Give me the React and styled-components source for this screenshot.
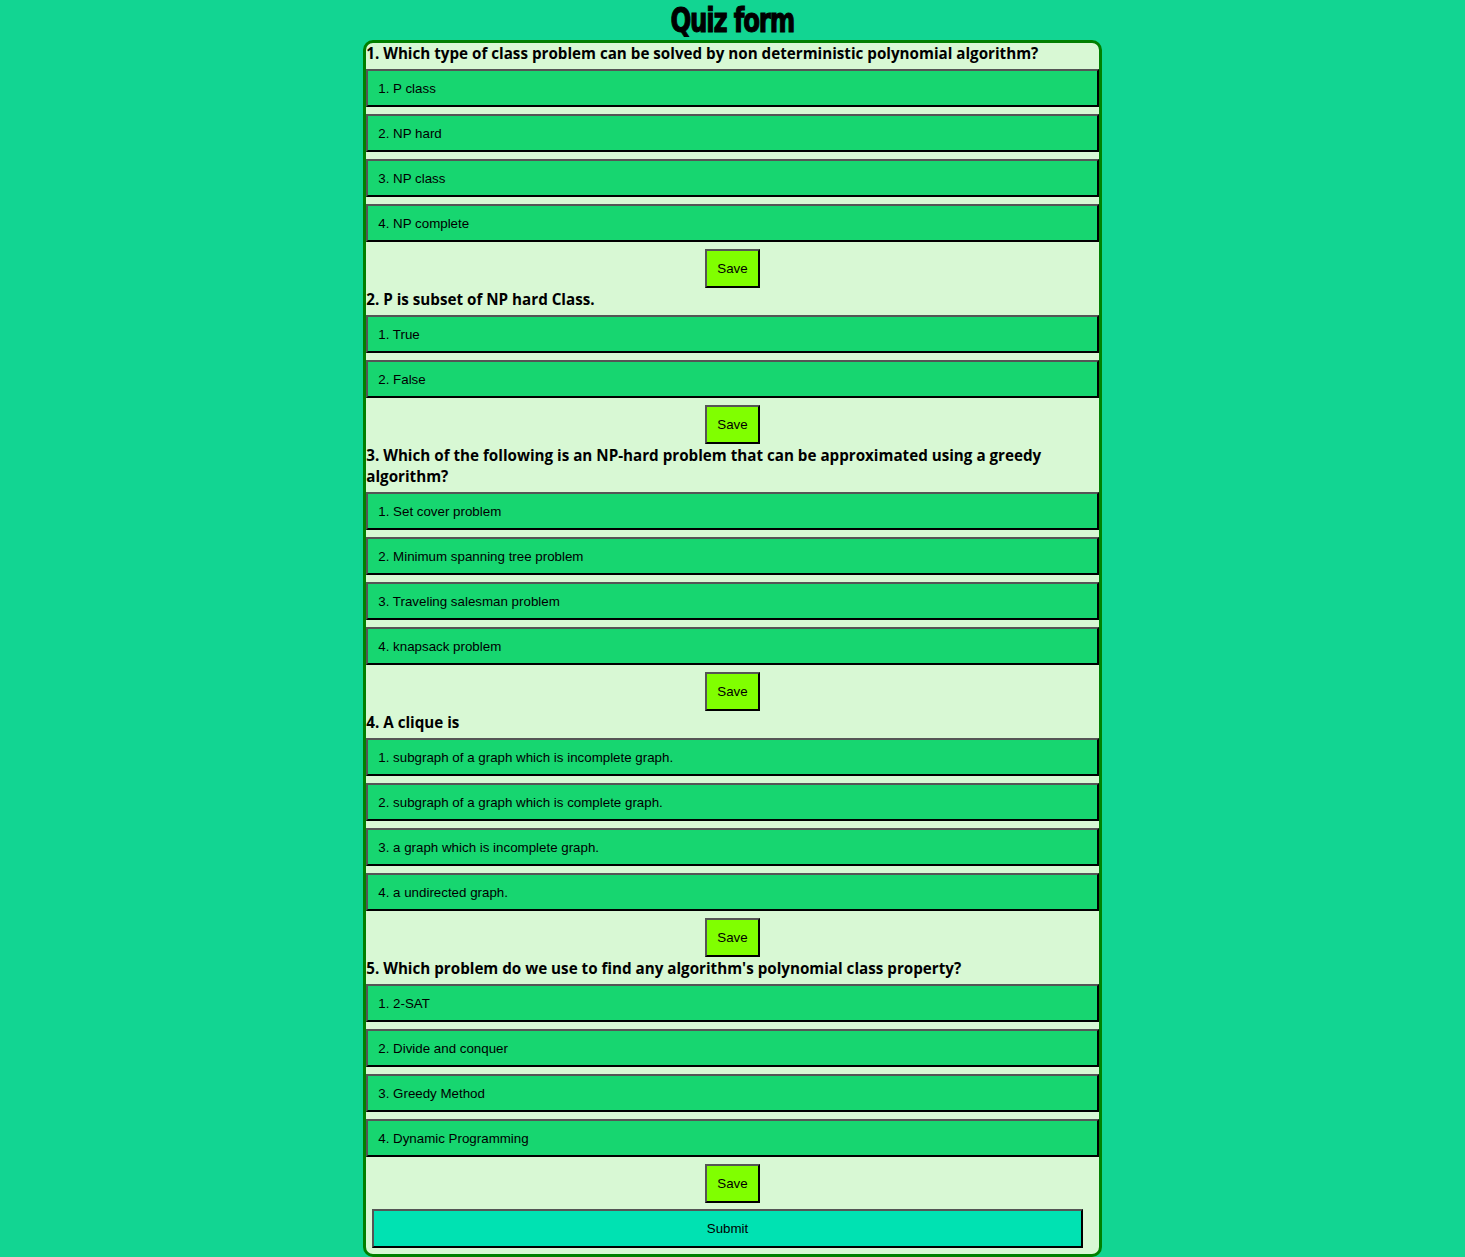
import { createGlobalStyle, styled } from 'styled-components';

const questions = [
  {
    text: '1. Which type of class problem can be solved by non deterministic polynomial algorithm?',
    options: ['P class', 'NP hard', 'NP class', 'NP complete'],
  },
  {
    text: '2. P is subset of NP hard Class.',
    options: ['True', 'False'],
  },
  {
    text: '3. Which of the following is an NP-hard problem that can be approximated using a greedy algorithm?',
    options: [
      'Set cover problem',
      'Minimum spanning tree problem',
      'Traveling salesman problem',
      'knapsack problem',
    ],
  },
  {
    text: '4. A clique is',
    options: [
      'subgraph of a graph which is incomplete graph.',
      'subgraph of a graph which is complete graph.',
      'a graph which is incomplete graph.',
      'a undirected graph.',
    ],
  },
  {
    text: "5. Which problem do we use to find any algorithm's polynomial class property?",
    options: ['2-SAT', 'Divide and conquer', 'Greedy Method', 'Dynamic Programming'],
  },
];

function App() {
  return (
    <>
      <GlobalStyles />
      <Title>
        <TitleText>Quiz form</TitleText>
      </Title>
      <Form>
        {questions.map((q) => (
          <Question key={q.text}>
            <QuestionText>{q.text}</QuestionText>
            {q.options.map((opt, i) => (
              <Option key={opt} type="button">
                {i + 1}. {opt}
              </Option>
            ))}
            <SaveButton type="button">Save</SaveButton>
          </Question>
        ))}
        <SubmitButton type="button">Submit</SubmitButton>
      </Form>
    </>
  );
}

const GlobalStyles = createGlobalStyle`
  body {
    margin: 0;
    background: #12d592;
    font-family: "Liberation Sans", Arial, sans-serif;
  }
`;

const Title = styled.h1`
  margin: 0;
  height: 40px;
  line-height: 40px;
  text-align: center;
  font-family: Impact, "DejaVu Sans", sans-serif;
  font-stretch: condensed;
  font-size: 34px;
  font-weight: bold;
  color: #000;
`;

const TitleText = styled.span`
  display: inline-block;
  letter-spacing: -1.5px;
  -webkit-text-stroke: 1px #000;
  transform: scaleX(0.8);
  transform-origin: center;
  margin-top: -2px;
`;

const Form = styled.div`
  width: 50%;
  margin: 0 auto;
  background: #d8f8d4;
  border: 3px solid #008000;
  border-radius: 10px;
  display: flex;
  flex-direction: column;
`;

const Question = styled.div`
  display: flex;
  flex-direction: column;
`;

const QuestionText = styled.h3`
  margin: 0 0 5px;
  font-family: "Open Sans", sans-serif;
  font-size: 15.2px;
  line-height: 21px;
  font-weight: bold;
  color: #000;
`;

const Option = styled.button`
  height: 38px;
  margin: 0 0 7px;
  padding: 0 10px;
  text-align: left;
  background: #17d670;
  border: 2px outset #555;
  border-right-color: #000;
  border-bottom-color: #000;
  font-family: "Liberation Sans", Arial, sans-serif;
  font-size: 13.33px;
  color: #000;
`;

const SaveButton = styled.button`
  align-self: center;
  width: 55px;
  height: 39px;
  margin: 0 0 1px;
  padding: 0;
  background: #80ff00;
  border: 2px outset #555;
  border-right-color: #000;
  border-bottom-color: #000;
  font-family: "Liberation Sans", Arial, sans-serif;
  font-size: 13.33px;
  color: #000;
`;

const SubmitButton = styled.button`
  width: 97%;
  height: 39px;
  margin: 5px 6px 6px;
  background: #00e2b2;
  border: 2px outset #555;
  border-right-color: #000;
  border-bottom-color: #000;
  font-family: "Liberation Sans", Arial, sans-serif;
  font-size: 13.33px;
  color: #000;
`;

export default App;
